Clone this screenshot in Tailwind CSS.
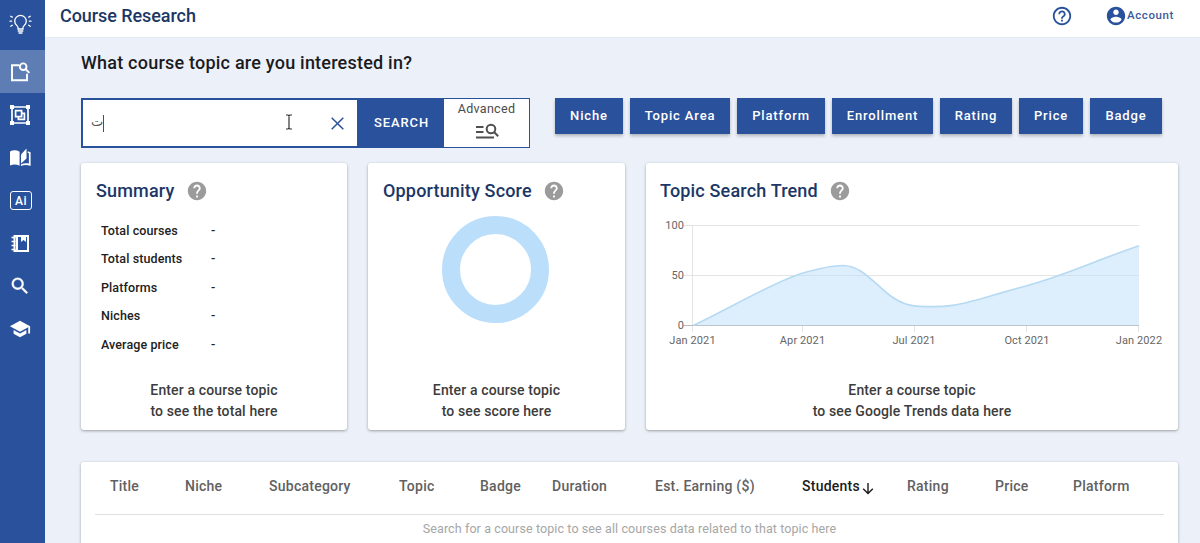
<!DOCTYPE html>
<html lang="en">
<head>
  <meta charset="UTF-8" />
  <meta name="viewport" content="width=device-width, initial-scale=1.0" />
  <title>Course Research</title>
  <script src="https://cdn.jsdelivr.net/npm/@tailwindcss/browser@4"></script>
</head>
<body class="h-[543px] overflow-hidden bg-[#ecf1f9] font-['Roboto',sans-serif] text-[#212121] flex">
  <!-- sidebar -->
  <nav class="w-[45px] shrink-0 bg-[#2a519c] text-white flex flex-col">
    <a class="h-[50px] pb-[3px] pl-[9px] flex items-center">
      <svg class="w-[23px] h-[23px]" viewBox="0 0 23 23" fill="none" stroke="currentColor" stroke-width="1.3" stroke-linecap="round">
        <path d="M9 17v-1.6c0-1.5-3.3-2.6-3.3-6.2a5.8 5.8 0 0 1 11.6 0c0 3.6-3.3 4.7-3.3 6.2V17z M9.2 19h4.6 M10 21h3" />
        <path d="M1 9.2h1.6 M20.4 9.2H22 M1.7 4.2l1.6.9 M21.3 4.2l-1.6.9 M1.7 14.2l1.6-.9 M21.3 14.2l-1.6-.9" />
      </svg>
    </a>
    <a class="h-[43px] pl-[9px] flex items-center bg-[#5f7db5]">
      <svg class="w-[22px] h-[22px]" viewBox="0 0 22 22" fill="none" stroke="currentColor" stroke-width="1.9">
        <path d="M10.5 4.3H3v15h15v-6.5" />
        <circle cx="14.2" cy="5.7" r="3.3" />
        <path d="M16.5 8l3.8 3.8" />
      </svg>
    </a>
    <a class="h-[43px] pl-[9px] flex items-center">
      <svg class="w-[22px] h-[22px]" viewBox="0 0 22 22" fill="none" stroke="currentColor" stroke-width="1.7">
        <path d="M3 3h16v16H3z" />
        <path d="M6.6 6.6h6v6h-6z M12.6 9.4h2.8v6H9.4v-2.8" />
        <path d="M1 1h4v4H1z M17 1h4v4h-4z M1 17h4v4H1z M17 17h4v4h-4z" fill="currentColor" stroke="none" />
      </svg>
    </a>
    <a class="h-[43px] pl-[9px] flex items-center">
      <svg class="w-[23px] h-[22px]" viewBox="0 0 23 22" fill="currentColor">
        <path d="M1 4.500C4 2.900 7.500 3 10.600 4.800v14C7.500 17.200 4 17.200 1 18.600z" />
        <path d="M12 7.500L17.500 1.500v10L12 16.500z" />
        <path d="M18.700 4.200c1 .2 2 .5 2.900 1v13.900c-3-1.500-6.500-1.500-9.600 0v-1.800c2.500-1.100 5.200-1.300 7.900-.8V6.200l-1.200-.3z" />
      </svg>
    </a>
    <a class="h-[43px] pl-[10px] flex items-center">
      <span class="w-[22px] h-[19px] border border-white rounded-[3px] flex items-center justify-center text-[12px] leading-none font-medium tracking-[0.5px]">Ai</span>
    </a>
    <a class="h-[43px] pl-[10px] flex items-center">
      <svg class="w-[21px] h-[21px]" viewBox="0 0 21 21" fill="none" stroke="currentColor" stroke-width="2">
        <path d="M4.500 3h13.500v15H4.500z" />
        <path d="M7 3v15" />
        <path d="M11 2h5v7l-2.500-1.900L11 9z" fill="currentColor" stroke="none" />
        <path d="M1.500 4.500h4 M1.500 8.500h4 M1.500 12.500h4 M1.500 16.500h4" stroke-width="1.600" />
      </svg>
    </a>
    <a class="h-[43px] pb-px pl-[9px] flex items-center">
      <svg class="w-[22px] h-[22px]" viewBox="0 0 24 24" fill="currentColor" stroke="currentColor" stroke-width="0.4">
        <path d="M15.500 14h-.79l-.28-.27A6.471 6.471 0 0 0 16 9.500 6.500 6.500 0 1 0 9.500 16c1.610 0 3.090-.59 4.230-1.570l.27.28v.79l5 4.990L20.490 19l-4.990-5zm-6 0C7.010 14 5 11.990 5 9.500S7.010 5 9.500 5 14 7.010 14 9.500 11.990 14 9.500 14z" />
      </svg>
    </a>
    <a class="h-[43px] pb-[2px] pl-[9px] flex items-center">
      <svg class="w-[22px] h-[22px]" viewBox="0 0 24 24" fill="currentColor">
        <path d="M5 13.180v4L12 21l7-3.820v-4L12 17l-7-3.820zM12 3L1 9l11 6 9-4.910V17h2V9L12 3z" />
      </svg>
    </a>
  </nav>

  <div class="flex-1 min-w-0 flex flex-col">
    <!-- top bar -->
    <header class="h-[38px] pb-[5px] shrink-0 bg-white pl-[15px] pr-[26px] flex items-center border-b border-[#e6ebf3]">
      <h1 class="text-[18px] leading-6 font-medium text-[#1c3766] tracking-[-0.07px]">Course Research</h1>
      <svg class="ml-auto w-[22px] h-[22px]" viewBox="0 0 24 24" fill="#2a519c">
        <path d="M11 18h2v-2h-2v2zm1-16C6.480 2 2 6.480 2 12s4.480 10 10 10 10-4.480 10-10S17.520 2 12 2zm0 18c-4.410 0-8-3.590-8-8s3.590-8 8-8 8 3.590 8 8-3.590 8-8 8zm0-14c-2.210 0-4 1.790-4 4h2c0-1.100.9-2 2-2s2 .9 2 2c0 2-3 1.750-3 5h2c0-2.250 3-2.500 3-5 0-2.210-1.790-4-4-4z" />
      </svg>
      <a class="ml-8 flex items-center text-[11.500px] font-medium text-[#3c5a99] tracking-[0.6px]">
        <svg class="w-[22px] h-[22px]" viewBox="0 0 24 24" fill="#2a519c">
          <path d="M12 2C6.480 2 2 6.480 2 12s4.480 10 10 10 10-4.480 10-10S17.520 2 12 2zm0 3c1.660 0 3 1.340 3 3s-1.340 3-3 3-3-1.340-3-3 1.340-3 3-3zm0 14.200c-2.500 0-4.710-1.280-6-3.220.03-1.990 4-3.080 6-3.080 1.990 0 5.970 1.090 6 3.080-1.290 1.940-3.500 3.220-6 3.220z" />
        </svg>
        Account
      </a>
    </header>

    <main class="pl-9 pr-[22px] pt-[13px]">
      <h2 class="text-[18px] leading-6 font-medium text-[#1b1b1f] tracking-[0.22px]">What course topic are you interested in?</h2>

      <!-- search row -->
      <div class="mt-[23px] flex items-start">
        <div class="w-[276px] h-[50px] bg-white border-2 border-r-0 border-[#2a519c] flex items-center pl-2 pr-[13px]">
          <span class="font-['DejaVu_Sans',sans-serif] text-[13px] leading-4 text-[#555] pb-[2px]">ت</span>
          <span class="w-px h-[17px] bg-[#2a519c]"></span>
          <svg class="ml-auto mr-[38px] mb-[2px] w-[8px] h-[16px]" viewBox="0 0 8 16" fill="none" stroke="#333" stroke-width="1.200">
            <path d="M1 1h2l1 .8L5 1h2 M4 1.500v13 M1 15h2l1-.8 1 .8h2" />
          </svg>
          <svg class="w-[13px] h-[13px] mt-px" viewBox="0 0 13 13" fill="none" stroke="#2a519c" stroke-width="1.500">
            <path d="M.7.7l11.600 11.600 M12.300.7L.7 12.300" />
          </svg>
        </div>
        <button class="w-[87px] h-[50px] pl-[2px] bg-[#2a519c] text-white text-[13px] font-medium tracking-[0.9px]">SEARCH</button>
        <button class="w-[86px] h-[50px] bg-white border border-l-0 border-[#2a519c] flex flex-col items-center text-[12.500px] leading-5 text-[#4a4a4a] tracking-[0.3px]">
          Advanced
          <svg class="w-6 h-6 mt-px" viewBox="0 0 24 24" fill="none" stroke="#4f4f4f" stroke-width="1.800">
            <path d="M1 7h7.500 M1 12h7.500 M1 17.500h18" />
            <circle cx="16" cy="9" r="4.300" stroke-width="2" />
            <path d="M19 12l4.200 4.200" stroke-width="2" />
          </svg>
        </button>
        <div class="ml-[25px] flex gap-[7px] text-[13px] font-medium text-white tracking-[0.85px]">
          <button class="w-[68px] h-9 bg-[#2a519c] shadow-[0_2px_3px_rgba(0,0,0,0.25)]">Niche</button>
          <button class="w-[100px] h-9 bg-[#2a519c] shadow-[0_2px_3px_rgba(0,0,0,0.25)]">Topic Area</button>
          <button class="w-[88px] h-9 bg-[#2a519c] shadow-[0_2px_3px_rgba(0,0,0,0.25)]">Platform</button>
          <button class="w-[101px] h-9 bg-[#2a519c] shadow-[0_2px_3px_rgba(0,0,0,0.25)]">Enrollment</button>
          <button class="w-[72px] h-9 bg-[#2a519c] shadow-[0_2px_3px_rgba(0,0,0,0.25)]">Rating</button>
          <button class="w-[64px] h-9 bg-[#2a519c] shadow-[0_2px_3px_rgba(0,0,0,0.25)]">Price</button>
          <button class="w-[72px] h-9 bg-[#2a519c] shadow-[0_2px_3px_rgba(0,0,0,0.25)]">Badge</button>
        </div>
      </div>

      <!-- cards -->
      <div class="mt-[15px] flex gap-[21px]">
        <section class="w-[266px] h-[267px] bg-white rounded-[3px] shadow-[0_1px_3px_rgba(0,0,0,0.35)] flex flex-col">
          <h3 class="pt-[15px] pl-[15px] flex items-center gap-[11px] text-[18px] leading-[26px] font-medium text-[#1c3766] tracking-[0.17px]">
            Summary
            <svg class="w-[22px] h-[22px]" viewBox="0 0 24 24" fill="#9b9b9b">
              <path d="M12 2C6.480 2 2 6.480 2 12s4.480 10 10 10 10-4.480 10-10S17.520 2 12 2zm1 17h-2v-2h2v2zm2.070-7.750l-.9.920C13.450 12.900 13 13.500 13 15h-2v-.5c0-1.100.45-2.100 1.170-2.830l1.240-1.260c.37-.36.59-.86.59-1.410 0-1.100-.9-2-2-2s-2 .9-2 2H8c0-2.210 1.790-4 4-4s4 1.790 4 4c0 .88-.36 1.680-.93 2.250z" />
            </svg>
          </h3>
          <dl class="mt-[12.500px] pl-5 grid grid-cols-[110px_1fr] text-[12.500px] leading-[28.500px] font-medium tracking-[0.1px]">
            <dt>Total courses</dt><dd>-</dd>
            <dt>Total students</dt><dd>-</dd>
            <dt>Platforms</dt><dd>-</dd>
            <dt>Niches</dt><dd>-</dd>
            <dt>Average price</dt><dd>-</dd>
          </dl>
          <p class="mt-auto mb-2 text-center text-[14px] leading-[21px] font-medium text-[#3c3c3c] tracking-[0.13px]">Enter a course topic<br />to see the total here</p>
        </section>

        <section class="w-[257px] h-[267px] bg-white rounded-[3px] shadow-[0_1px_3px_rgba(0,0,0,0.35)] flex flex-col">
          <h3 class="pt-[15px] pl-[15px] flex items-center gap-[11px] text-[18px] leading-[26px] font-medium text-[#1c3766] tracking-[0.17px]">
            Opportunity Score
            <svg class="w-[22px] h-[22px]" viewBox="0 0 24 24" fill="#9b9b9b">
              <path d="M12 2C6.480 2 2 6.480 2 12s4.480 10 10 10 10-4.480 10-10S17.520 2 12 2zm1 17h-2v-2h2v2zm2.070-7.750l-.9.920C13.450 12.900 13 13.500 13 15h-2v-.5c0-1.100.45-2.100 1.170-2.830l1.240-1.260c.37-.36.59-.86.59-1.410 0-1.100-.9-2-2-2s-2 .9-2 2H8c0-2.210 1.790-4 4-4s4 1.790 4 4c0 .88-.36 1.680-.93 2.250z" />
            </svg>
          </h3>
          <div class="mt-3 ml-[74px] w-[107px] h-[107px] rounded-full border-[18px] border-[#bbdefb]"></div>
          <p class="mt-auto mb-2 text-center text-[14px] leading-[21px] font-medium text-[#3c3c3c] tracking-[0.13px]">Enter a course topic<br />to see score here</p>
        </section>

        <section class="w-[532px] h-[267px] bg-white rounded-[3px] shadow-[0_1px_3px_rgba(0,0,0,0.35)] flex flex-col">
          <h3 class="pt-[15px] pl-[14px] flex items-center gap-[11px] text-[18px] leading-[26px] font-medium text-[#1c3766] tracking-[0.17px]">
            Topic Search Trend
            <svg class="w-[22px] h-[22px]" viewBox="0 0 24 24" fill="#9b9b9b">
              <path d="M12 2C6.480 2 2 6.480 2 12s4.480 10 10 10 10-4.480 10-10S17.520 2 12 2zm1 17h-2v-2h2v2zm2.070-7.750l-.9.920C13.450 12.900 13 13.500 13 15h-2v-.5c0-1.100.45-2.100 1.170-2.830l1.240-1.260c.37-.36.59-.86.59-1.410 0-1.100-.9-2-2-2s-2 .9-2 2H8c0-2.210 1.790-4 4-4s4 1.790 4 4c0 .88-.36 1.680-.93 2.250z" />
            </svg>
          </h3>
          <svg class="mt-[11px] w-[532px] h-[135px]" viewBox="646 215 532 135">
            <path d="M683 225.500H1139 M683 275.500H1139 M692.500 225v107 M802.500 325v7 M914.500 325v7 M1026.500 325v7 M1138.500 325v7" stroke="#e4e4e4" fill="none" />
            <path d="M683 325.500H1139" stroke="#bdbdbd" />
            <path d="M693 325.500C723 312 775 281 803 273C817 269 832 265.500 843 265.500C870 265.500 884 303 914 305.800C958 310 972 300 1026 286C1072 273 1086 264 1139 245.700V325.500z" fill="#bbdefb" fill-opacity="0.500" />
            <path d="M693 325.500C723 312 775 281 803 273C817 269 832 265.500 843 265.500C870 265.500 884 303 914 305.800C958 310 972 300 1026 286C1072 273 1086 264 1139 245.700" fill="none" stroke="#b7daf3" stroke-width="1.700" />
            <g fill="#666" font-size="11" text-anchor="end" letter-spacing="0.1">
              <text x="684" y="229">100</text>
              <text x="684" y="279">50</text>
              <text x="684" y="329">0</text>
            </g>
            <g fill="#666" font-size="11" text-anchor="middle" letter-spacing="0.1">
              <text x="692.500" y="344">Jan 2021</text>
              <text x="802.500" y="344">Apr 2021</text>
              <text x="914" y="344">Jul 2021</text>
              <text x="1027" y="344">Oct 2021</text>
              <text x="1139" y="344">Jan 2022</text>
            </g>
          </svg>
          <p class="mt-auto mb-2 text-center text-[14px] leading-[21px] font-medium text-[#3c3c3c] tracking-[0.13px]">Enter a course topic<br />to see Google Trends data here</p>
        </section>
      </div>

      <!-- courses table -->
      <section class="mt-8 h-[81px] bg-white rounded-t-[3px] shadow-[0_1px_3px_rgba(0,0,0,0.35)] px-[14px]">
        <div class="h-[53px] pl-[15px] pb-[3px] grid grid-cols-[75px_84px_130px_81px_72px_103px_147px_105px_88px_78px_1fr] items-center border-b border-[#e0e0e0] text-[14px] font-medium text-[#616161] tracking-[0.25px] whitespace-nowrap">
          <span>Title</span>
          <span>Niche</span>
          <span>Subcategory</span>
          <span>Topic</span>
          <span>Badge</span>
          <span>Duration</span>
          <span>Est. Earning ($)</span>
          <span class="flex items-center text-[#1b1b1b]">Students
            <svg class="w-4 h-4 mt-[3px]" viewBox="0 0 16 16" fill="none" stroke="currentColor" stroke-width="1.400"><path d="M8 3v10.500 M3.200 8.800L8 13.500l4.800-4.700" /></svg>
          </span>
          <span>Rating</span>
          <span>Price</span>
          <span>Platform</span>
        </div>
        <p class="pt-[4px] text-center text-[12.500px] leading-5 text-[#a6a6a6] tracking-[0.1px]">Search for a course topic to see all courses data related to that topic here</p>
      </section>
    </main>
  </div>
</body>
</html>
